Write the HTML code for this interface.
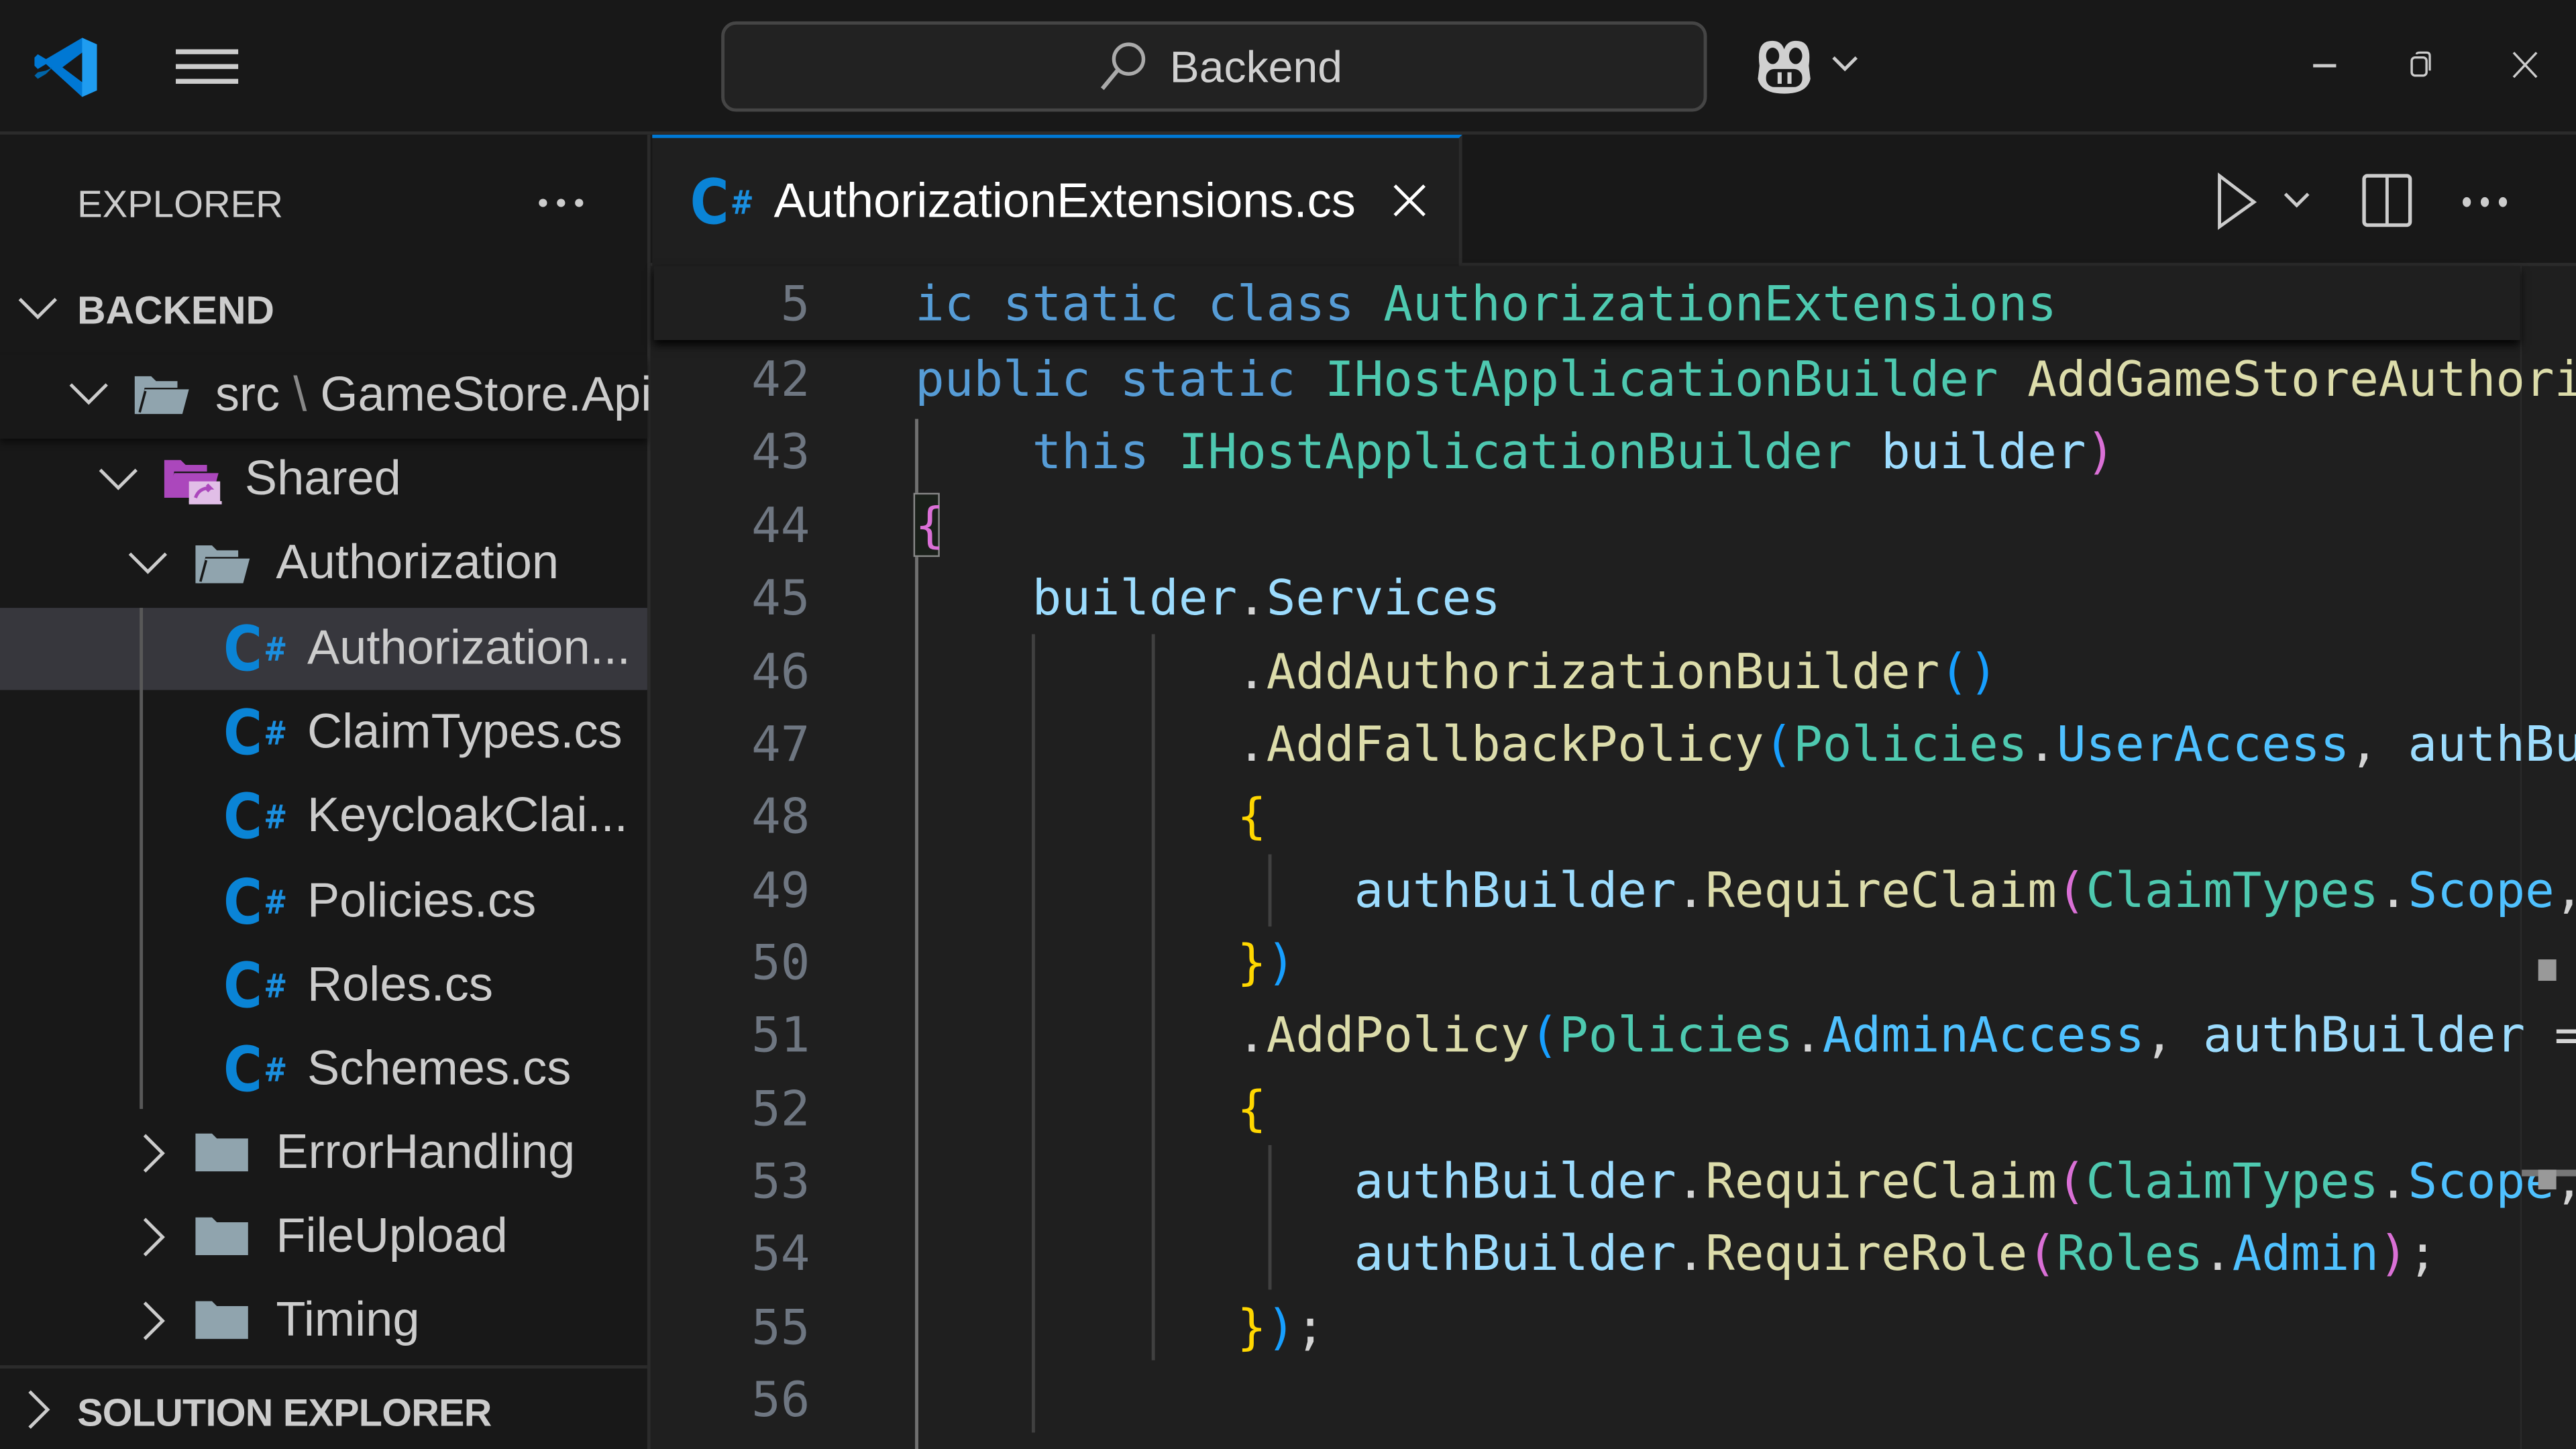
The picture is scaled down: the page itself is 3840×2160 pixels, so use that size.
<!DOCTYPE html>
<html><head><meta charset="utf-8">
<style>
html,body{margin:0;padding:0;background:#181818;overflow:hidden;width:3840px;height:2160px}
#w{position:absolute;left:0;top:0;width:1568px;height:882px;transform:scale(2.44898);transform-origin:0 0;background:#181818;overflow:hidden;font-family:"Liberation Sans","DejaVu Sans",sans-serif;color:#cccccc}
.a{position:absolute}
.t{position:absolute;white-space:nowrap;font-size:29.5px;line-height:50px;height:50px;color:#cccccc}
.code{position:absolute;left:557px;white-space:pre;font-family:"DejaVu Sans Mono","Liberation Mono",monospace;font-size:29.6px;height:44.36px;line-height:44.36px;color:#d4d4d4}
.ln{position:absolute;left:420px;width:73px;text-align:right;font-family:"DejaVu Sans Mono",monospace;font-size:29.6px;height:44.36px;line-height:44.36px;color:#6e7681}
.k{color:#569cd6}.ty{color:#4ec9b0}.v{color:#9cdcfe}.m{color:#dcdcaa}.y{color:#ffd700}.p{color:#da70d6}.b{color:#179fff}.c{color:#4fc1ff}
.g{position:absolute;width:1.5px;background:#404040}
.cs{position:absolute;font-weight:900;color:#0a84d6;font-size:38px;line-height:34px;font-family:"DejaVu Sans","Liberation Sans",sans-serif;transform:scaleX(0.85);transform-origin:0 0}
.cs span{font-size:20px;font-weight:bold;vertical-align:top;position:relative;top:0px;margin-left:1px;color:#1a8fe0}
</style></head><body>
<div id="w">
<div class="a" style="left:0;top:0;width:1568px;height:80px;background:#181818;border-bottom:2px solid #2b2b2b"></div>
<svg class="a" style="left:20px;top:22px" width="42" height="38" viewBox="0 0 42 38">
 <path d="M30 1 L39 5 L39 33 L30 37 L8 17 L3 20 L1 18 L1 13 L3 11 L8 14 Z" fill="#0078d4"/>
 <path d="M30 1 L39 5 L39 33 L30 37 Z" fill="#1f9cf0"/>
 <path d="M30 10 L18 19 L30 28 Z" fill="#181818"/>
 <path d="M1 24 L3 26 L8 23 L12 19 L8 21 L3 22 Z" fill="#0065a9"/>
</svg>
<div class="a" style="left:107px;top:30px;width:38px;height:2.5px;background:#ccc"></div>
<div class="a" style="left:107px;top:39px;width:38px;height:2.5px;background:#ccc"></div>
<div class="a" style="left:107px;top:48px;width:38px;height:2.5px;background:#ccc"></div>
<div class="a" style="left:439px;top:13px;width:596px;height:51px;border:2px solid #454545;border-radius:9px;background:#222222"></div>
<svg class="a" style="left:668px;top:23px" width="34" height="34" viewBox="0 0 34 34"><circle cx="19" cy="13" r="9" stroke="#aaa" stroke-width="2.2" fill="none"/><path d="M12.5 19.5 L3 31" stroke="#aaa" stroke-width="2.5"/></svg>
<div class="t" style="left:712px;top:16px;font-size:27px;color:#d0d0d0">Backend</div>
<svg class="a" style="left:1066px;top:20px" width="74" height="40" viewBox="0 0 74 40">
 <path d="M5 20 Q3 6 11 5 Q18 4 20 10 Q22 4 29 5 Q37 6 35 20 L36 28 Q34 37 20 37 Q6 37 4 28 Z" fill="#d0d0d0"/>
 <ellipse cx="13" cy="14" rx="4" ry="5" fill="#181818"/><ellipse cx="27" cy="14" rx="4" ry="5" fill="#181818"/>
 <rect x="9" y="22" width="22" height="11" rx="5" fill="#181818"/>
 <rect x="16" y="24" width="2.5" height="7" fill="#d0d0d0"/><rect x="22" y="24" width="2.5" height="7" fill="#d0d0d0"/>
 <path d="M50 15 L57 22 L64 15" stroke="#ccc" stroke-width="2" fill="none"/>
</svg>
<div class="a" style="left:1408px;top:39px;width:14px;height:1.5px;background:#ccc"></div>
<svg class="a" style="left:1466px;top:31px" width="16" height="17" viewBox="0 0 16 17"><rect x="2" y="4" width="9" height="11" rx="2" stroke="#ccc" stroke-width="1.4" fill="none"/><path d="M5 2 Q5 1 7 1 L11 1 Q13 1 13 3 L13 12" stroke="#ccc" stroke-width="1.3" fill="none"/></svg>
<svg class="a" style="left:1529px;top:31px" width="16" height="17" viewBox="0 0 16 17"><path d="M1 1 L15 16 M15 1 L1 16" stroke="#ccc" stroke-width="1.4"/></svg>

<div class="a" style="left:0;top:82px;width:394px;height:800px;background:#181818;border-right:2px solid #2b2b2b"></div>
<div class="t" style="left:47px;top:99px;font-size:23px;color:#cccccc">EXPLORER</div>
<div class="a" style="left:328px;top:121px;width:5px;height:5px;border-radius:50%;background:#ccc;box-shadow:11px 0 0 #ccc,22px 0 0 #ccc"></div>
<svg class="a" style="left:11px;top:178px" width="26" height="20" viewBox="0 0 26 20"><path d="M1 4 L12 15 L23 4" stroke="#ccc" stroke-width="2" fill="none"/></svg>
<div class="t" style="left:47px;top:165px;font-size:24px;font-weight:bold;color:#cccccc">BACKEND</div>
<div class="a" style="left:0;top:216px;width:394px;height:51px;background:#181818;box-shadow:0 3px 4px rgba(0,0,0,0.5)"></div>
<svg class="a" style="left:42px;top:230px" width="26" height="20" viewBox="0 0 26 20"><path d="M1 4 L12 15 L23 4" stroke="#ccc" stroke-width="2" fill="none"/></svg>
<svg class="a" style="left:80px;top:227px" width="36" height="28" viewBox="0 0 36 28"><path d="M2 2 L12 2 L15 5 L28 5 L28 9 L8 9 L5 25 L2 25 Z" fill="#90a4ae"/><path d="M8 10 L35 10 L31 25 L3 25 Z" fill="#90a4ae"/><path d="M8.5 11 L5 24" stroke="#181818" stroke-width="1.5"/></svg>
<div class="t" style="left:131px;top:216px">src<span style="color:#888"> \ </span>GameStore.Api</div>
<svg class="a" style="left:60px;top:282px" width="26" height="20" viewBox="0 0 26 20"><path d="M1 4 L12 15 L23 4" stroke="#ccc" stroke-width="2" fill="none"/></svg>
<svg class="a" style="left:98px;top:278px" width="38" height="30" viewBox="0 0 38 30"><path d="M2 2 L12 2 L15 5 L28 5 L28 9 L8 9 L5 25 L2 25 Z" fill="#ab47bc"/><path d="M8 10 L35 10 L31 25 L3 25 Z" fill="#ab47bc"/><rect x="17" y="15" width="19" height="13" fill="#e1bee7"/><path d="M21 25 Q23 19 30 19 L28 17 M30 19 L28 21" stroke="#ab47bc" stroke-width="2" fill="none"/><rect x="17" y="27" width="20" height="2" fill="#e1bee7"/></svg>
<div class="t" style="left:149px;top:267px">Shared</div>
<svg class="a" style="left:78px;top:333px" width="26" height="20" viewBox="0 0 26 20"><path d="M1 4 L12 15 L23 4" stroke="#ccc" stroke-width="2" fill="none"/></svg>
<svg class="a" style="left:117px;top:330px" width="36" height="28" viewBox="0 0 36 28"><path d="M2 2 L12 2 L15 5 L28 5 L28 9 L8 9 L5 25 L2 25 Z" fill="#90a4ae"/><path d="M8 10 L35 10 L31 25 L3 25 Z" fill="#90a4ae"/><path d="M8.5 11 L5 24" stroke="#181818" stroke-width="1.5"/></svg>
<div class="t" style="left:168px;top:318px">Authorization</div>
<div class="a" style="left:0;top:370px;width:394px;height:50px;background:#37373d"></div>
<div class="a" style="left:85px;top:370px;width:1.5px;height:305px;background:#585858"></div>
<div class="cs" style="left:136px;top:378px">C<span>#</span></div><div class="t" style="left:187px;top:370px">Authorization...</div>
<div class="cs" style="left:136px;top:429px">C<span>#</span></div><div class="t" style="left:187px;top:421px">ClaimTypes.cs</div>
<div class="cs" style="left:136px;top:480px">C<span>#</span></div><div class="t" style="left:187px;top:472px">KeycloakClai...</div>
<div class="cs" style="left:136px;top:532px">C<span>#</span></div><div class="t" style="left:187px;top:524px">Policies.cs</div>
<div class="cs" style="left:136px;top:583px">C<span>#</span></div><div class="t" style="left:187px;top:575px">Roles.cs</div>
<div class="cs" style="left:136px;top:634px">C<span>#</span></div><div class="t" style="left:187px;top:626px">Schemes.cs</div>
<svg class="a" style="left:84px;top:690px" width="20" height="26" viewBox="0 0 20 26"><path d="M4 1 L15 12 L4 23" stroke="#ccc" stroke-width="2" fill="none"/></svg>
<svg class="a" style="left:117px;top:688px" width="36" height="28" viewBox="0 0 36 28"><path d="M2 2 L12 2 L15 5 L34 5 L34 25 L2 25 Z" fill="#90a4ae"/></svg>
<div class="t" style="left:168px;top:677px">ErrorHandling</div>
<svg class="a" style="left:84px;top:741px" width="20" height="26" viewBox="0 0 20 26"><path d="M4 1 L15 12 L4 23" stroke="#ccc" stroke-width="2" fill="none"/></svg>
<svg class="a" style="left:117px;top:739px" width="36" height="28" viewBox="0 0 36 28"><path d="M2 2 L12 2 L15 5 L34 5 L34 25 L2 25 Z" fill="#90a4ae"/></svg>
<div class="t" style="left:168px;top:728px">FileUpload</div>
<svg class="a" style="left:84px;top:792px" width="20" height="26" viewBox="0 0 20 26"><path d="M4 1 L15 12 L4 23" stroke="#ccc" stroke-width="2" fill="none"/></svg>
<svg class="a" style="left:117px;top:790px" width="36" height="28" viewBox="0 0 36 28"><path d="M2 2 L12 2 L15 5 L34 5 L34 25 L2 25 Z" fill="#90a4ae"/></svg>
<div class="t" style="left:168px;top:779px">Timing</div>
<div class="a" style="left:0;top:831px;width:394px;height:2px;background:#2b2b2b"></div>
<svg class="a" style="left:14px;top:846px" width="20" height="26" viewBox="0 0 20 26"><path d="M4 1 L15 12 L4 23" stroke="#ccc" stroke-width="2" fill="none"/></svg>
<div class="t" style="left:47px;top:835px;font-size:23.5px;font-weight:bold;letter-spacing:-0.3px">SOLUTION EXPLORER</div>

<div class="a" style="left:396px;top:82px;width:1172px;height:78px;background:#181818;border-bottom:2px solid #2b2b2b"></div>
<div class="a" style="left:397px;top:82px;width:493px;height:80px;background:#1f1f1f;border-top:2px solid #0078d4;border-right:2px solid #2b2b2b;box-sizing:border-box"></div>
<div class="cs" style="left:420px;top:106px">C<span>#</span></div>
<div class="t" style="left:471px;top:98px;color:#fff;font-size:29.5px">AuthorizationExtensions.cs</div>
<svg class="a" style="left:847px;top:111px" width="22" height="22" viewBox="0 0 22 22"><path d="M2 2 L20 20 M20 2 L2 20" stroke="#fff" stroke-width="2"/></svg>
<svg class="a" style="left:1346px;top:104px" width="70" height="36" viewBox="0 0 70 36"><path d="M5 3 L26 19 L5 34 Z" stroke="#ccc" stroke-width="2" fill="none"/><path d="M45 14 L52 21 L59 14" stroke="#ccc" stroke-width="2" fill="none"/></svg>
<svg class="a" style="left:1437px;top:105px" width="34" height="34" viewBox="0 0 34 34"><rect x="2" y="2" width="28" height="30" rx="2" stroke="#ccc" stroke-width="2.2" fill="none"/><path d="M16 2 L16 32" stroke="#ccc" stroke-width="2"/></svg>
<div class="a" style="left:1499px;top:120px;width:5px;height:6px;border-radius:50%;background:#ccc;box-shadow:11px 0 0 #ccc,22px 0 0 #ccc"></div>

<div class="a" style="left:396px;top:162px;width:1172px;height:720px;background:#1f1f1f"></div>
<div class="a" style="left:1534px;top:162px;width:1px;height:720px;background:#2a2a2a"></div>
<div class="a" style="left:557px;top:255px;width:2px;height:627px;background:#707070"></div>
<div class="g" style="left:628px;top:386px;height:486px"></div>
<div class="g" style="left:701px;top:386px;height:442px"></div>
<div class="g" style="left:772px;top:520px;height:44px"></div>
<div class="g" style="left:772px;top:697px;height:88px"></div>
<div class="a" style="left:556px;top:300px;width:16px;height:39px;border:1.5px solid #888;box-sizing:border-box;background:#1a201a"></div>

<div class="ln" style="top:209px">42</div><div class="code" style="top:209px"><span class="k">public static</span> <span class="ty">IHostApplicationBuilder</span> <span class="m">AddGameStoreAuthorization</span><span class="p">(</span></div>
<div class="ln" style="top:253px">43</div><div class="code" style="top:253px">    <span class="k">this</span> <span class="ty">IHostApplicationBuilder</span> <span class="v">builder</span><span class="p">)</span></div>
<div class="ln" style="top:298px">44</div><div class="code" style="top:298px"><span class="p">{</span></div>
<div class="ln" style="top:342px">45</div><div class="code" style="top:342px">    <span class="v">builder</span>.<span class="v">Services</span></div>
<div class="ln" style="top:387px">46</div><div class="code" style="top:387px">           .<span class="m">AddAuthorizationBuilder</span><span class="b">()</span></div>
<div class="ln" style="top:431px">47</div><div class="code" style="top:431px">           .<span class="m">AddFallbackPolicy</span><span class="b">(</span><span class="ty">Policies</span>.<span class="c">UserAccess</span>, <span class="v">authBuilder</span> =&gt;</div>
<div class="ln" style="top:475px">48</div><div class="code" style="top:475px">           <span class="y">{</span></div>
<div class="ln" style="top:520px">49</div><div class="code" style="top:520px">               <span class="v">authBuilder</span>.<span class="m">RequireClaim</span><span class="p">(</span><span class="ty">ClaimTypes</span>.<span class="c">Scope</span>, </div>
<div class="ln" style="top:564px">50</div><div class="code" style="top:564px">           <span class="y">}</span><span class="b">)</span></div>
<div class="ln" style="top:608px">51</div><div class="code" style="top:608px">           .<span class="m">AddPolicy</span><span class="b">(</span><span class="ty">Policies</span>.<span class="c">AdminAccess</span>, <span class="v">authBuilder</span> =&gt;</div>
<div class="ln" style="top:653px">52</div><div class="code" style="top:653px">           <span class="y">{</span></div>
<div class="ln" style="top:697px">53</div><div class="code" style="top:697px">               <span class="v">authBuilder</span>.<span class="m">RequireClaim</span><span class="p">(</span><span class="ty">ClaimTypes</span>.<span class="c">Scope</span>, </div>
<div class="ln" style="top:741px">54</div><div class="code" style="top:741px">               <span class="v">authBuilder</span>.<span class="m">RequireRole</span><span class="p">(</span><span class="ty">Roles</span>.<span class="c">Admin</span><span class="p">)</span>;</div>
<div class="ln" style="top:786px">55</div><div class="code" style="top:786px">           <span class="y">}</span><span class="b">)</span>;</div>
<div class="ln" style="top:830px">56</div>
<div class="a" style="left:1545px;top:584px;width:11px;height:13px;background:#999"></div>
<div class="a" style="left:1535px;top:712px;width:33px;height:4px;background:#777"></div>
<div class="a" style="left:1545px;top:712px;width:11px;height:12px;background:#999"></div>

<div class="a" style="left:398px;top:162px;width:1136px;height:45px;background:#1f1f1f;box-shadow:0 3px 5px rgba(0,0,0,0.9)"></div>
<div class="ln" style="top:163px">5</div><div class="code" style="top:163px"><span class="k">ic static class</span> <span class="ty">AuthorizationExtensions</span></div>
</div>
</body></html>
